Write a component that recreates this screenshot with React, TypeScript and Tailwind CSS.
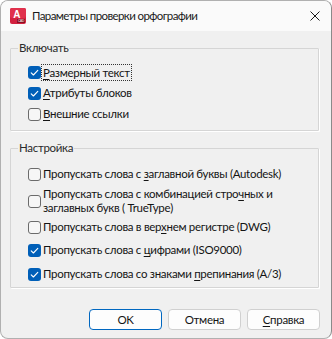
import type { ReactNode } from "react";

const font = { fontFamily: 'Lato, "Noto Sans", sans-serif' };

function Box({ checked }: { checked: boolean }) {
  if (checked) {
    return (
      <span className="flex h-[13px] w-[13px] shrink-0 items-center justify-center rounded-[3px] bg-[#005fb8]">
        <svg width="13" height="13" viewBox="0 0 13 13" fill="none">
          <path d="M3.2 6.8 L5.4 9 L9.8 4.4" stroke="#fff" strokeWidth="1.1" strokeLinecap="round" strokeLinejoin="round" />
        </svg>
      </span>
    );
  }
  return <span className="h-[13px] w-[13px] shrink-0 rounded-[3px] border border-[#6b6b6b] bg-[#f6f6f6]" />;
}

function Row({ checked, children, className = "" }: { checked: boolean; children: ReactNode; className?: string }) {
  return (
    <div className={`flex items-center gap-[2px] ${className}`}>
      <Box checked={checked} />
      <span className="whitespace-nowrap leading-[14px]">{children}</span>
    </div>
  );
}

function Group({ title, children, className = "" }: { title: string; children: ReactNode; className?: string }) {
  return (
    <fieldset className={`w-[309px] rounded-[1px] border border-[#d5d5d5] p-0 shadow-[1px_1px_0_#fff] ${className}`}>
      <legend className="ml-[7px] px-[1px] leading-[16px] text-[#2a2a2a]">{title}</legend>
      {children}
    </fieldset>
  );
}

export default function App() {
  return (
    <div
      style={font}
      className="flex h-[339px] w-[332px] flex-col overflow-hidden rounded-[8px] border border-[#b0b0b0] border-r-[#8a8a8a] bg-[#f0f0f0] text-[11.5px] tracking-[-0.3px] text-[#141414]"
    >
      <div className="flex h-[30px] shrink-0 items-center bg-[#fafafa] pl-[9px] pr-[10px]">
        <svg width="16" height="16" viewBox="0 0 16 16" className="shrink-0">
          <rect x="0" y="0" width="16" height="16" rx="2" fill="#d2203f" />
          <rect x="0" y="0" width="16" height="10" rx="2" fill="#e0304c" />
          <text x="6.6" y="9.5" fontSize="10" fontWeight="700" fill="#fff" textAnchor="middle" fontFamily="Liberation Sans, sans-serif">A</text>
          <rect x="7" y="11" width="8" height="4" fill="#8a0d22" />
          <text x="11" y="14.3" fontSize="3.2" fill="#fff" textAnchor="middle" fontFamily="Liberation Sans, sans-serif">CAD</text>
        </svg>
        <span className="ml-[6px] flex-1 whitespace-nowrap tracking-[-0.6px] text-[#1a1a1a]">Параметры проверки орфографии</span>
        <svg width="10" height="10" viewBox="0 0 10 10" className="mr-[1px]">
          <path d="M0.5 0.5 L9.5 9.5 M9.5 0.5 L0.5 9.5" stroke="#1a1a1a" strokeWidth="1" />
        </svg>
      </div>

      <div className="flex flex-1 flex-col pl-[9px] pt-[9px]">
        <Group title="Включать">
          <div className="flex flex-col gap-[5px] pb-[8px] pl-[17px] pt-[8px]">
            <div className="flex h-[16px] items-center gap-[1px]">
              <Box checked />
              <span className="whitespace-nowrap px-[1px] leading-[15px] outline outline-1 outline-dotted outline-[#333]">
                <u className="underline-offset-2">Р</u>азмерный текст
              </span>
            </div>
            <Row checked className="h-[16px]">
              <u className="underline-offset-2">А</u>трибуты блоков
            </Row>
            <Row checked={false} className="h-[16px]">
              <u className="underline-offset-2">В</u>нешние ссылки
            </Row>
          </div>
        </Group>

        <Group title="Настройка" className="mt-[9px]">
          <div className="flex flex-col pb-[5px] pl-[17px] pt-[10px]">
            <Row checked={false} className="h-[16px]">
              Пропускать слова с <u className="underline-offset-2">з</u>аглавной буквы (Autodesk)
            </Row>
            <Row checked={false} className="mt-[5px] h-[28px]">
              Пропускать слова с комбинацией стро<u className="underline-offset-2">ч</u>ных и
              <br />
              заглавных букв ( TrueType)
            </Row>
            <Row checked={false} className="mt-[4px] h-[16px]">
              Пропускать слова в вер<u className="underline-offset-2">х</u>нем регистре (DWG)
            </Row>
            <Row checked className="mt-[7px] h-[16px]">
              Пропускать слова с <u className="underline-offset-2">ц</u>ифрами (ISO9000)
            </Row>
            <Row checked className="mt-[8px] h-[16px]">
              Пропускать слова со знаками <u className="underline-offset-2">п</u>репинания (A/3)
            </Row>
          </div>
        </Group>

        <div className="mt-[21px] flex justify-end gap-[6px] pr-[11px]">
          <button className="h-[21px] w-[73px] rounded-[4px] border border-[#0067c0] bg-[#fdfdfd] leading-none">OK</button>
          <button className="h-[21px] w-[73px] rounded-[4px] border border-[#d0d0d0] bg-[#fdfdfd] leading-none">Отмена</button>
          <button className="h-[21px] w-[73px] rounded-[4px] border border-[#d0d0d0] bg-[#fdfdfd] leading-none">
            <u className="underline-offset-2">С</u>правка
          </button>
        </div>
      </div>
    </div>
  );
}
